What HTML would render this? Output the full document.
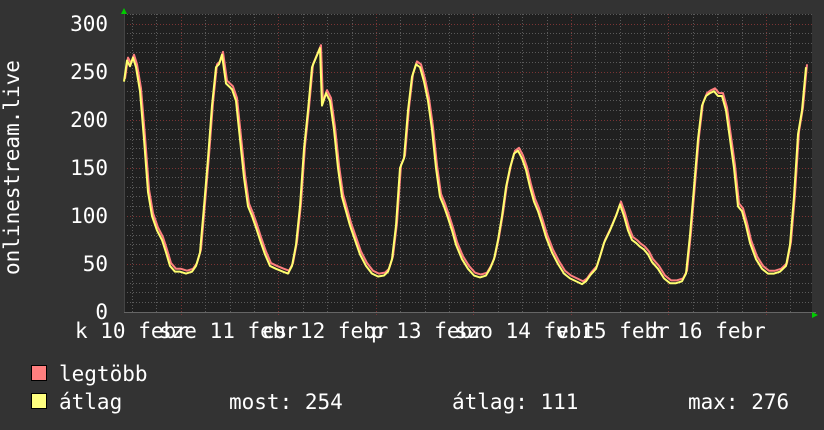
<!DOCTYPE html>
<html><head><meta charset="utf-8"><style>
html,body{margin:0;padding:0;background:#333333;width:824px;height:430px;overflow:hidden}
.t{position:absolute;font-family:"DejaVu Sans Mono","Liberation Mono",monospace;font-size:21px;color:#fff;white-space:pre;line-height:20px}
.r{text-align:right;width:60px}
.sq{position:absolute;width:14px;height:14px;border:1px solid #000}
</style></head><body>
<svg width="824" height="430" style="position:absolute;left:0;top:0">
<rect x="124" y="14" width="688" height="298" fill="#202020"/>
<g stroke="#5a5a5a" stroke-width="1" stroke-dasharray="1,2">
<line x1="124" x2="812" y1="302.5" y2="302.5"/><line x1="124" x2="812" y1="292.5" y2="292.5"/><line x1="124" x2="812" y1="283.5" y2="283.5"/><line x1="124" x2="812" y1="273.5" y2="273.5"/>
<line x1="124" x2="812" y1="254.5" y2="254.5"/><line x1="124" x2="812" y1="244.5" y2="244.5"/><line x1="124" x2="812" y1="235.5" y2="235.5"/><line x1="124" x2="812" y1="225.5" y2="225.5"/>
<line x1="124" x2="812" y1="206.5" y2="206.5"/><line x1="124" x2="812" y1="196.5" y2="196.5"/><line x1="124" x2="812" y1="187.5" y2="187.5"/><line x1="124" x2="812" y1="177.5" y2="177.5"/>
<line x1="124" x2="812" y1="158.5" y2="158.5"/><line x1="124" x2="812" y1="148.5" y2="148.5"/><line x1="124" x2="812" y1="139.5" y2="139.5"/><line x1="124" x2="812" y1="129.5" y2="129.5"/>
<line x1="124" x2="812" y1="110.5" y2="110.5"/><line x1="124" x2="812" y1="100.5" y2="100.5"/><line x1="124" x2="812" y1="91.5" y2="91.5"/><line x1="124" x2="812" y1="81.5" y2="81.5"/>
<line x1="124" x2="812" y1="62.5" y2="62.5"/><line x1="124" x2="812" y1="52.5" y2="52.5"/><line x1="124" x2="812" y1="43.5" y2="43.5"/><line x1="124" x2="812" y1="33.5" y2="33.5"/><line x1="124" x2="812" y1="14.5" y2="14.5"/>
<line y1="14" y2="312" x1="132.5" x2="132.5"/><line y1="14" y2="312" x1="156.5" x2="156.5"/><line y1="14" y2="312" x1="205.5" x2="205.5"/><line y1="14" y2="312" x1="230.5" x2="230.5"/><line y1="14" y2="312" x1="254.5" x2="254.5"/>
<line y1="14" y2="312" x1="303.5" x2="303.5"/><line y1="14" y2="312" x1="327.5" x2="327.5"/><line y1="14" y2="312" x1="352.5" x2="352.5"/>
<line y1="14" y2="312" x1="400.5" x2="400.5"/><line y1="14" y2="312" x1="425.5" x2="425.5"/><line y1="14" y2="312" x1="449.5" x2="449.5"/>
<line y1="14" y2="312" x1="498.5" x2="498.5"/><line y1="14" y2="312" x1="522.5" x2="522.5"/><line y1="14" y2="312" x1="547.5" x2="547.5"/>
<line y1="14" y2="312" x1="595.5" x2="595.5"/><line y1="14" y2="312" x1="620.5" x2="620.5"/><line y1="14" y2="312" x1="644.5" x2="644.5"/>
<line y1="14" y2="312" x1="693.5" x2="693.5"/><line y1="14" y2="312" x1="717.5" x2="717.5"/><line y1="14" y2="312" x1="742.5" x2="742.5"/><line y1="14" y2="312" x1="790.5" x2="790.5"/>
</g>
<g stroke="#7a3434" stroke-width="1" stroke-dasharray="1,2">
<line x1="124" x2="812" y1="264.5" y2="264.5"/><line x1="124" x2="812" y1="216.5" y2="216.5"/><line x1="124" x2="812" y1="168.5" y2="168.5"/><line x1="124" x2="812" y1="120.5" y2="120.5"/><line x1="124" x2="812" y1="72.5" y2="72.5"/><line x1="124" x2="812" y1="24.5" y2="24.5"/>
<line y1="14" y2="316" x1="181.5" x2="181.5"/><line y1="14" y2="316" x1="278.5" x2="278.5"/><line y1="14" y2="316" x1="376.5" x2="376.5"/><line y1="14" y2="316" x1="473.5" x2="473.5"/><line y1="14" y2="316" x1="571.5" x2="571.5"/><line y1="14" y2="316" x1="668.5" x2="668.5"/><line y1="14" y2="316" x1="766.5" x2="766.5"/>
</g>
<line x1="124" x2="816" y1="312.5" y2="312.5" stroke="#666"/>
<line x1="124.5" x2="124.5" y1="10" y2="312" stroke="#444"/>
<polygon points="121,14 127,14 124,8" fill="#0c0"/>
<polygon points="812,312 812,318 818,315" fill="#0c0"/>
<g transform="translate(0,312) scale(1,-0.96)" fill="none" stroke-linejoin="round">
<polyline vector-effect="non-scaling-stroke" stroke="#ff7f7f" stroke-width="2" transform="translate(1,3)" points="124,240 127,262 130,256 133,265 136,255 140,230 144,180 148,125 152,100 157,85 162,75 166,62 170,48 175,42 180,42 186,40 192,42 196,48 200,62 204,110 208,160 212,215 216,255 219,258 222,268 226,238 232,232 236,220 240,180 244,140 248,110 252,100 256,88 260,75 265,60 270,48 276,45 283,42 288,40 292,48 296,70 300,110 304,170 308,210 312,255 316,265 320,275 322,215 326,228 330,220 334,190 338,150 342,120 346,105 350,90 355,75 360,60 366,48 372,40 378,37 384,38 388,42 392,55 396,90 400,150 404,160 408,210 412,245 416,258 420,255 424,240 428,220 432,190 436,150 440,120 444,110 448,98 452,85 456,70 462,55 468,45 474,38 480,36 486,38 490,45 494,55 498,75 502,100 506,130 510,150 514,165 518,168 522,160 526,148 530,130 534,115 538,105 542,92 546,78 552,62 558,50 564,40 570,35 576,32 582,29 586,32 590,38 596,45 600,58 604,72 610,85 616,100 620,112 624,100 628,85 632,75 636,72 640,68 644,65 648,60 652,52 658,45 664,35 670,30 676,30 682,32 686,40 690,80 694,130 698,180 702,215 706,225 710,228 714,230 718,225 722,225 726,210 730,180 734,150 738,110 742,105 746,90 750,72 756,55 762,45 768,40 774,40 780,42 786,48 790,70 794,120 798,185 802,210 806,255"/>
<polyline vector-effect="non-scaling-stroke" stroke="#ffff70" stroke-width="2" points="124,240 127,262 130,256 133,265 136,255 140,230 144,180 148,125 152,100 157,85 162,75 166,62 170,48 175,42 180,42 186,40 192,42 196,48 200,62 204,110 208,160 212,215 216,255 219,258 222,268 226,238 232,232 236,220 240,180 244,140 248,110 252,100 256,88 260,75 265,60 270,48 276,45 283,42 288,40 292,48 296,70 300,110 304,170 308,210 312,255 316,265 320,275 322,215 326,228 330,220 334,190 338,150 342,120 346,105 350,90 355,75 360,60 366,48 372,40 378,37 384,38 388,42 392,55 396,90 400,150 404,160 408,210 412,245 416,258 420,255 424,240 428,220 432,190 436,150 440,120 444,110 448,98 452,85 456,70 462,55 468,45 474,38 480,36 486,38 490,45 494,55 498,75 502,100 506,130 510,150 514,165 518,168 522,160 526,148 530,130 534,115 538,105 542,92 546,78 552,62 558,50 564,40 570,35 576,32 582,29 586,32 590,38 596,45 600,58 604,72 610,85 616,100 620,112 624,100 628,85 632,75 636,72 640,68 644,65 648,60 652,52 658,45 664,35 670,30 676,30 682,32 686,40 690,80 694,130 698,180 702,215 706,225 710,228 714,230 718,225 722,225 726,210 730,180 734,150 738,110 742,105 746,90 750,72 756,55 762,45 768,40 774,40 780,42 786,48 790,70 794,120 798,185 802,210 806,255"/>
</g>
</svg>
<div class="t r" style="left:48px;top:14px">300</div>
<div class="t r" style="left:48px;top:62px">250</div>
<div class="t r" style="left:48px;top:110px">200</div>
<div class="t r" style="left:48px;top:158px">150</div>
<div class="t r" style="left:48px;top:206px">100</div>
<div class="t r" style="left:48px;top:254px">50</div>
<div class="t r" style="left:48px;top:302px">0</div>
<div class="t" style="left:2px;top:275px;transform:rotate(-90deg);transform-origin:0 0;width:220px">onlinestream.live</div>
<div class="t" style="left:75px;top:321px">k 10 febr</div>
<div class="t" style="left:159px;top:321px">sze 11 febr</div>
<div class="t" style="left:262px;top:321px">cs 12 febr</div>
<div class="t" style="left:371px;top:321px">p 13 febr</div>
<div class="t" style="left:455px;top:321px">szo 14 febr</div>
<div class="t" style="left:556px;top:321px">v 15 febr</div>
<div class="t" style="left:652px;top:321px">h 16 febr</div>
<div class="sq" style="left:31px;top:365px;background:#ff7f7f"></div>
<div class="sq" style="left:31px;top:393px;background:#ffff7f"></div>
<div class="t" style="left:59px;top:364px">legtöbb</div>
<div class="t" style="left:59px;top:392px">átlag</div>
<div class="t" style="left:229px;top:392px">most: 254</div>
<div class="t" style="left:452px;top:392px">átlag: 111</div>
<div class="t" style="left:688px;top:392px">max: 276</div>
</body></html>
